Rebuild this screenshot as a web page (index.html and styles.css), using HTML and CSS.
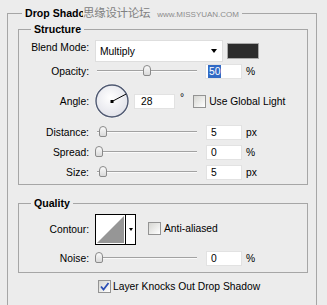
FILE: index.html
```html
<!DOCTYPE html>
<html lang="en">
<head>
  <meta charset="UTF-8">
  <title>Drop Shadow</title>
  <link rel="stylesheet" href="styles.css">
</head>
<body>

  <!-- Layer style panel -->
  <div class="panel">
    <div class="group-title">Drop Shadow</div>
    <div class="watermark"><span class="wm-cn">思缘设计论坛</span><span class="wm-en">www.MISSYUAN.COM</span></div>

    <!-- Structure -->
    <div class="group structure">
      <div class="group-title">Structure</div>

      <div class="row row-blend">
        <span class="label label-top">Blend Mode:</span>
        <div class="select"><span>Multiply</span><span class="caret"></span></div>
        <span class="swatch"></span>
      </div>

      <div class="row row-slider row-opacity">
        <span class="label">Opacity:</span>
        <div class="slider"><span class="thumb" style="left: 48px"></span></div>
        <span class="field field-first"><span class="selected">50</span></span>
        <span class="unit">%</span>
      </div>

      <div class="row row-angle">
        <span class="label">Angle:</span>
        <div class="dial">
          <svg width="36" height="36" viewBox="0 0 36 36">
            <defs>
              <radialGradient id="dialFill" cx="45%" cy="40%" r="60%">
                <stop offset="0" stop-color="#ffffff"/>
                <stop offset="1" stop-color="#e2e3ea"/>
              </radialGradient>
            </defs>
            <circle cx="18" cy="18" r="16.8" fill="none" stroke="#ffffff" stroke-width="1"/>
            <circle cx="18" cy="18" r="16" fill="url(#dialFill)" stroke="#4e5870" stroke-width="1.4"/>
            <line x1="18" y1="18.5" x2="32.2" y2="11" stroke="#000" stroke-width="1"/>
            <rect x="16.5" y="17" width="3" height="3" fill="#000"/>
          </svg>
        </div>
        <span class="field field-wide">28</span>
        <span class="unit deg">°</span>
        <span class="check check-global"><span class="box"></span>Use Global Light</span>
      </div>

      <div class="row row-slider row-tight">
        <span class="label">Distance:</span>
        <div class="slider"><span class="thumb" style="left: 4px"></span></div>
        <span class="field">5</span>
        <span class="unit">px</span>
      </div>

      <div class="row row-slider">
        <span class="label">Spread:</span>
        <div class="slider"><span class="thumb" style="left: 0px"></span></div>
        <span class="field">0</span>
        <span class="unit">%</span>
      </div>

      <div class="row row-slider">
        <span class="label">Size:</span>
        <div class="slider"><span class="thumb" style="left: 4px"></span></div>
        <span class="field">5</span>
        <span class="unit">px</span>
      </div>
    </div>

    <!-- Quality -->
    <div class="group quality">
      <div class="group-title">Quality</div>

      <div class="row row-contour">
        <span class="label">Contour:</span>
        <div class="contour">
          <svg class="contour-preview" width="29" height="29" viewBox="0 0 29 29">
            <rect width="29" height="29" fill="#fff"/>
            <polygon points="1,28 28,1 28,28" fill="#969696"/>
          </svg>
          <span class="contour-arrow"><span class="caret caret-small"></span></span>
        </div>
        <span class="check check-aa"><span class="box"></span>Anti-aliased</span>
      </div>

      <div class="row row-noise">
        <span class="label">Noise:</span>
        <div class="slider"><span class="thumb" style="left: 0px"></span></div>
        <span class="field">0</span>
        <span class="unit">%</span>
      </div>
    </div>

    <span class="check knockout">
      <span class="box checked">
        <svg width="11" height="11" viewBox="0 0 11 11"><path d="M2 5.5 L4.5 8.5 L9.5 2" fill="none" stroke="#2c4fb5" stroke-width="1.8"/></svg>
      </span>Layer Knocks Out Drop Shadow
    </span>
  </div>

</body>
</html>
```

FILE: styles.css
```css
/* Global Styles */
body {
  margin: 0;
  padding: 0;
  background-color: #ececec;
  color: #000;
  font-family: 'Liberation Sans', Arial, sans-serif;
  font-size: 10.3px;
  line-height: 13px;
  overflow: hidden;
}

/* Panels and group boxes (panel runs on below the window) */
.panel {
  position: relative;
  box-sizing: border-box;
  width: 310px;
  height: 292px;
  margin: 13px 0 0 7px;
  border: 1px solid #a6a6a6;
  border-bottom: none;
}
.group {
  box-sizing: border-box;
  width: 290px;
  margin: 9px 0 0 10px;
  border: 1px solid #a6a6a6;
}
.structure {
  height: 156px;
}
.quality {
  height: 70px;
  margin-top: 18px;
}
.group-title {
  width: fit-content;
  margin: -7px 0 0 14px;
  padding: 0 3px;
  background-color: #ececec;
  font-size: 10.6px;
  font-weight: bold;
}
.group .group-title {
  margin-left: 12px;
}

/* Watermark over the title line */
.watermark {
  position: absolute;
  left: 75px;
  top: -8px;
  display: flex;
  align-items: baseline;
  height: 14px;
  padding-right: 3px;
  background-color: #ececec;
  color: #808080;
}
.wm-cn {
  font-family: 'Noto Sans CJK SC', sans-serif;
  font-size: 11.5px;
  letter-spacing: -0.3px;
}
.wm-en {
  margin-left: 7px;
  font-size: 8px;
  color: #8c8c8c;
}

/* Rows */
.row {
  display: flex;
  align-items: center;
}
.label {
  width: 70px;
  margin-right: 6px;
  text-align: right;
  flex-shrink: 0;
}
.label-top {
  align-self: flex-start;
  margin-top: 1px;
}
.row-blend {
  height: 22px;
  margin-top: 4px;
}
.row-slider {
  height: 20px;
}
.row-opacity {
  height: 18px;
}
.row-tight {
  margin-top: 3px;
}
.row-angle {
  height: 36px;
  margin-top: 3px;
}
.row-contour {
  height: 31px;
  margin-top: 4px;
}
.row-noise {
  height: 18px;
  margin-top: 4px;
}

/* Controls */
.select {
  box-sizing: border-box;
  display: flex;
  align-items: center;
  width: 128px;
  height: 22px;
  padding-left: 4px;
  background-color: #fff;
  border: 1px solid #dedede;
}
.caret {
  margin: 0 5px 0 auto;
  border-left: 3.5px solid transparent;
  border-right: 3.5px solid transparent;
  border-top: 4px solid #000;
}
.caret-small {
  margin: 0;
  border-left-width: 2.5px;
  border-right-width: 2.5px;
  border-top-width: 3px;
}
.swatch {
  box-sizing: border-box;
  width: 32px;
  height: 16px;
  margin-left: 4px;
  background-color: #2c2c2c;
  border: 1px solid #a9a9a9;
}

.slider {
  position: relative;
  width: 103px;
  height: 12px;
}
.slider::before {
  content: "";
  position: absolute;
  left: 2px;
  width: 100px;
  top: 5px;
  height: 1px;
  background-color: #a2a2a2;
  border-bottom: 1px solid #fafafa;
}
.thumb {
  position: absolute;
  top: 0;
  box-sizing: border-box;
  width: 8px;
  height: 11px;
  background: linear-gradient(#fbfbfb, #d9d9d9);
  border: 1px solid #8a8a8a;
  border-radius: 4px 4px 2px 2px;
}

.field {
  box-sizing: border-box;
  width: 36px;
  height: 15px;
  margin-left: 8px;
  padding-left: 4px;
  background-color: #fff;
  border: 1px solid #e2e2e2;
  line-height: 13px;
}
.field-first {
  margin-left: 7px;
  width: 37px;
  padding-left: 2px;
}
.selected {
  display: inline-block;
  padding: 0 1px;
  background-color: #316ac5;
  color: #fff;
}
.field-wide {
  width: 41px;
  margin-left: 4px;
  padding-left: 6px;
}
.unit {
  margin-left: 4px;
}
.deg {
  align-self: flex-start;
  margin-top: 8px;
  margin-left: 5px;
}

.dial {
  width: 36px;
  height: 36px;
  margin-left: -1px;
}
.dial svg {
  display: block;
}

/* Checkboxes */
.check {
  display: flex;
  align-items: center;
}
.box {
  box-sizing: border-box;
  display: flex;
  align-items: center;
  justify-content: center;
  width: 13px;
  height: 13px;
  margin-right: 3px;
  background: linear-gradient(135deg, #d6d6d2, #ffffff);
  border: 1px solid #939393;
}
.check-global {
  margin-left: 9px;
}
.check-aa {
  margin-left: 12px;
  margin-top: -2px;
}
.knockout {
  height: 16px;
  margin: 5px 0 0 90px;
}
.knockout .box {
  margin-right: 2px;
}

/* Contour picker */
.contour {
  display: flex;
  height: 31px;
  border: 1px solid #000;
  box-sizing: border-box;
  width: 41px;
}
.contour-preview {
  display: block;
}
.contour-arrow {
  display: flex;
  align-items: center;
  justify-content: center;
  flex: 1;
  background-color: #fff;
  border-left: 1px solid #000;
}
```
